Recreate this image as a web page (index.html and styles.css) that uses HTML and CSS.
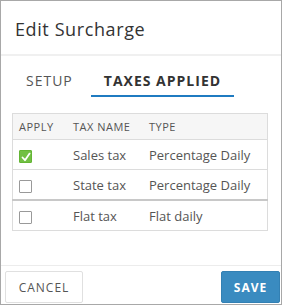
FILE: index.html
```html
<!DOCTYPE html>
<html lang="en">
<head>
    <meta charset="UTF-8">
    <title>Edit Surcharge</title>
    <link rel="stylesheet" href="styles.css">
</head>
<body>
    <div class="dialog">
        <div class="dialog-header">Edit Surcharge</div>

        <div class="tabs">
            <a href="#" class="tab">SETUP</a>
            <a href="#" class="tab active">TAXES APPLIED</a>
        </div>

        <div class="dialog-body">
            <table class="tax-table">
                <thead>
                    <tr>
                        <th class="col-apply">APPLY</th>
                        <th class="col-name">TAX NAME</th>
                        <th>TYPE</th>
                    </tr>
                </thead>
                <tbody>
                    <tr>
                        <td class="col-apply"><span class="check checked">
                            <svg viewBox="0 0 12 12" width="12" height="12"><path d="M2.5 6.5 L5 9.2 L9.6 2.6" fill="none" stroke="#fff" stroke-width="1.8" stroke-linecap="round" stroke-linejoin="round"/></svg>
                        </span></td>
                        <td>Sales tax</td>
                        <td>Percentage Daily</td>
                    </tr>
                    <tr class="row-split">
                        <td class="col-apply"><span class="check"></span></td>
                        <td>State tax</td>
                        <td>Percentage Daily</td>
                    </tr>
                    <tr>
                        <td class="col-apply"><span class="check"></span></td>
                        <td>Flat tax</td>
                        <td>Flat daily</td>
                    </tr>
                </tbody>
            </table>
        </div>

        <div class="dialog-footer">
            <button class="btn btn-cancel">CANCEL</button>
            <button class="btn btn-save">SAVE</button>
        </div>
    </div>
</body>
</html>
```

FILE: styles.css
```css
body {
    margin: 0;
    padding: 0;
    font-family: "Open Sans", Arial, sans-serif;
    color: #444;
}

.dialog {
    width: 282px;
    height: 305px;
    box-sizing: border-box;
    border: 1px solid #a8a8a8;
    display: flex;
    flex-direction: column;
    background: #fff;
}

.dialog-header {
    height: 55px;
    box-sizing: border-box;
    padding: 16px 0 0 14px;
    font-size: 18px;
    letter-spacing: 0.6px;
    color: #333;
    border-bottom: 2px solid #f0f0f0;
}

/* Tabs */
.tabs {
    display: flex;
    padding: 15px 0 0 12px;
}

.tab {
    font-size: 14px;
    letter-spacing: 1px;
    color: #555;
    text-decoration: none;
    padding: 0 13px 5px 13px;
    border-bottom: 2px solid transparent;
}

.tab.active {
    font-weight: bold;
    color: #333;
    margin-left: 5px;
    border-bottom-color: #1f7bc1;
}

/* Table */
.dialog-body {
    flex: 1;
    padding: 16px 13px 0 11px;
}

.tax-table {
    width: 100%;
    border-collapse: collapse;
    border: 1px solid #dcdcdc;
    font-size: 13px;
}

.tax-table th {
    background-color: #f6f6f6;
    font-size: 11px;
    letter-spacing: 0.5px;
    font-weight: normal;
    color: #555;
    text-align: left;
    height: 25px;
    padding: 0;
    border-bottom: 1px solid #dcdcdc;
}

.tax-table td {
    height: 29px;
    padding: 0;
    color: #555;
    border-bottom: 1px solid #dcdcdc;
}

.tax-table tr.row-split td {
    border-bottom: 2px solid #c8c8c8;
}

.tax-table .col-apply {
    width: 54px;
    padding-left: 6px;
}

.tax-table .col-name {
    width: 76px;
}

.check {
    display: inline-block;
    width: 11px;
    height: 11px;
    border: 1px solid #999;
    border-radius: 1px;
    vertical-align: middle;
    box-sizing: content-box;
}

.check.checked {
    background-color: #72c044;
    border-color: #63b534;
}

.check svg {
    display: block;
}

/* Footer */
.dialog-footer {
    display: flex;
    justify-content: space-between;
    border-top: 1px solid #ececec;
    padding: 5px 1px 1px 4px;
}

.btn {
    font-family: "Open Sans", Arial, sans-serif;
    font-size: 12px;
    letter-spacing: 1px;
    height: 32px;
    border-radius: 2px;
    cursor: pointer;
}

.btn-cancel {
    width: 78px;
    background: #fff;
    border: 1px solid #e0e0e0;
    color: #555;
}

.btn-save {
    width: 59px;
    background-color: #3a8bc0;
    border: 1px solid #3380b3;
    color: #fff;
    font-weight: bold;
}
```
